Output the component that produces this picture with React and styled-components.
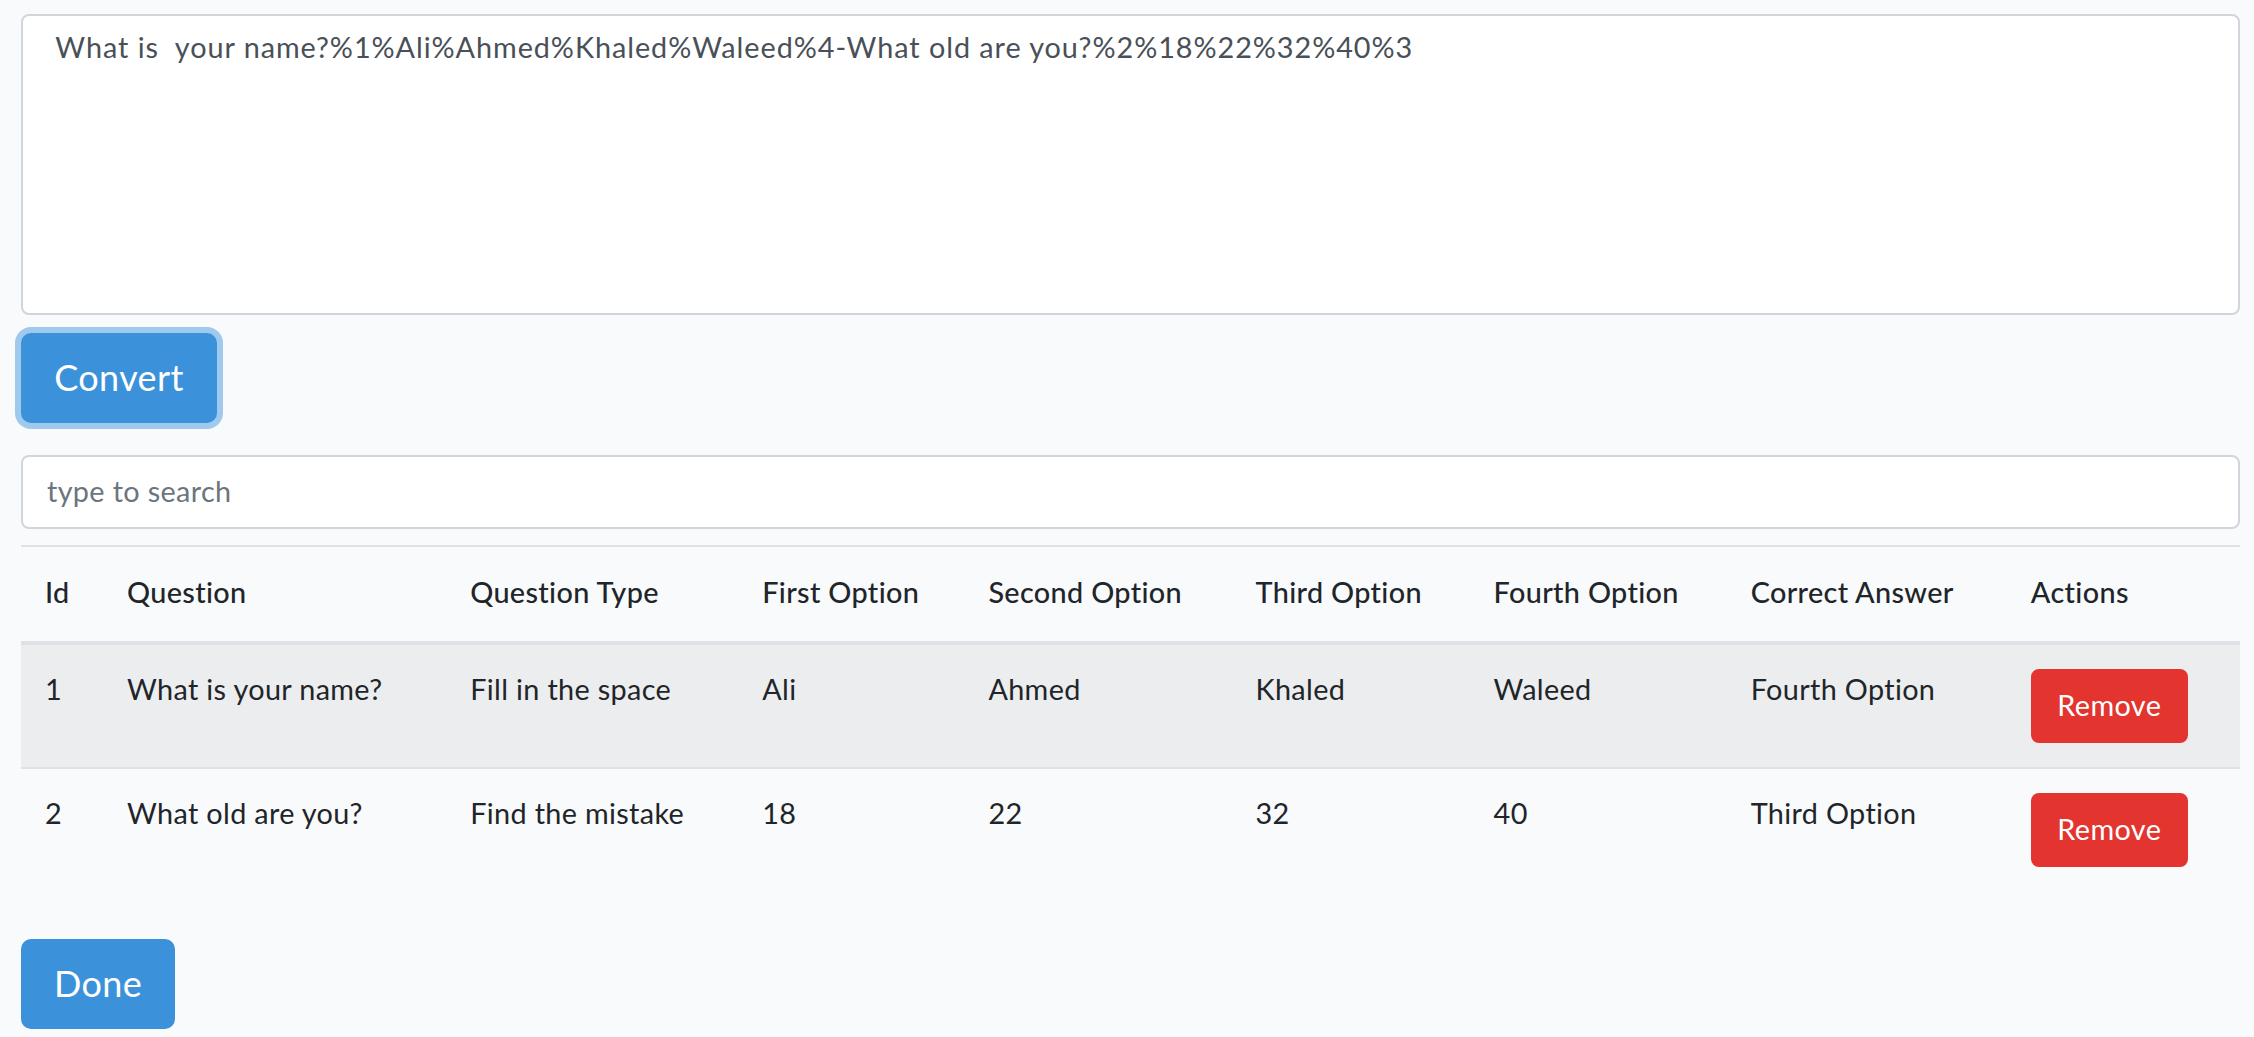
import React, { useState } from 'react';
import styled, { createGlobalStyle } from 'styled-components';

const GlobalStyle = createGlobalStyle`
  html, body {
    margin: 0;
    padding: 0;
    background: #f8fafc;
  }
  body {
    font-family: Lato, "Open Sans", sans-serif;
    font-size: 28.8px;
    line-height: 1.6;
    color: #212529;
  }
  * { box-sizing: border-box; }
`;

const Page = styled.div`
  padding: 14px 14px 8px 21px;
  display: flex;
  flex-direction: column;
  align-items: flex-start;
`;

const SourceArea = styled.textarea`
  display: block;
  width: 100%;
  height: 301px;
  padding: 8px 24px;
  font-family: inherit;
  font-size: 28.8px;
  line-height: 1.6;
  letter-spacing: 0.95px;
  color: #495057;
  background: #fff;
  border: 2px solid #d2d5dc;
  border-radius: 8px;
  resize: none;
  outline: none;
`;

const Button = styled.button`
  display: inline-block;
  font-family: inherit;
  font-size: ${p => (p.$large ? '36px' : '28.8px')};
  line-height: ${p => (p.$large ? '54px' : '46px')};
  letter-spacing: 0.4px;
  color: #fff;
  background: ${p => (p.$danger ? '#e3342f' : '#3c92da')};
  border: 2px solid ${p => (p.$danger ? '#e3342f' : '#3c92da')};
  border-radius: ${p => (p.$large ? '10px' : '8px')};
  padding: ${p => (p.$large ? '15px 0 17px' : '11px 0 13px')};
  width: ${p => p.$width}px;
  text-align: center;
  cursor: pointer;
  box-shadow: ${p => (p.$focused ? '0 0 0 6px rgba(52, 144, 220, 0.45)' : 'none')};
`;

const ConvertRow = styled.div`
  margin-top: 18px;
  line-height: 0;
`;

const SearchInput = styled.input`
  display: block;
  width: 100%;
  height: 74px;
  margin-top: 32px;
  padding: 0 24px 2px;
  font-family: inherit;
  font-size: 28.8px;
  letter-spacing: 0.35px;
  color: #495057;
  background: #fff;
  border: 2px solid #d2d5dc;
  border-radius: 8px;
  outline: none;
  &::placeholder { color: #6c757d; }
`;

const Table = styled.table`
  width: 100%;
  margin-top: 16px;
  margin-bottom: 48px;
  border-collapse: collapse;
  table-layout: fixed;
  letter-spacing: 0.35px;
`;

const HeadCell = styled.th`
  text-align: left;
  font-weight: 500;
  padding: 22px 24px 26px;
  vertical-align: bottom;
  border-top: 2px solid #dee2e6;
  border-bottom: 4px solid #dee2e6;
  line-height: 46px;
`;

const Row = styled.tr`
  background: ${p => (p.$striped ? '#ecedef' : 'transparent')};
`;

const Cell = styled.td`
  padding: ${p => (p.$action ? '24px' : '21px 24px 27px')};
  vertical-align: top;
  line-height: 46px;
  border-top: ${p => (p.$first ? 'none' : '2px solid #dee2e6')};
  white-space: nowrap;
`;

const columns = [
  { label: 'Id', width: 82 },
  { label: 'Question', width: 343 },
  { label: 'Question Type', width: 292 },
  { label: 'First Option', width: 226 },
  { label: 'Second Option', width: 267 },
  { label: 'Third Option', width: 238 },
  { label: 'Fourth Option', width: 257 },
  { label: 'Correct Answer', width: 280 },
  { label: 'Actions', width: 233 },
];

const initialRows = [
  { id: 1, question: 'What is your name?', type: 'Fill in the space', options: ['Ali', 'Ahmed', 'Khaled', 'Waleed'], correct: 'Fourth Option' },
  { id: 2, question: 'What old are you?', type: 'Find the mistake', options: ['18', '22', '32', '40'], correct: 'Third Option' },
];

export default function App() {
  const [source, setSource] = useState(' What is  your name?%1%Ali%Ahmed%Khaled%Waleed%4-What old are you?%2%18%22%32%40%3');
  const [rows, setRows] = useState(initialRows);
  const [search, setSearch] = useState('');

  const visible = rows.filter(r => r.question.toLowerCase().includes(search.toLowerCase()));

  return (
    <>
      <GlobalStyle />
      <Page>
        <SourceArea value={source} onChange={e => setSource(e.target.value)} />
        <ConvertRow>
          <Button $large $focused $width={196}>Convert</Button>
        </ConvertRow>
        <SearchInput placeholder="type to search" value={search} onChange={e => setSearch(e.target.value)} />
        <Table>
          <colgroup>
            {columns.map(c => <col key={c.label} style={{ width: c.width }} />)}
          </colgroup>
          <thead>
            <tr>
              {columns.map(c => <HeadCell key={c.label}>{c.label}</HeadCell>)}
            </tr>
          </thead>
          <tbody>
            {visible.map((r, i) => (
              <Row key={r.id} $striped={i % 2 === 0}>
                <Cell $first={i === 0}>{r.id}</Cell>
                <Cell $first={i === 0}>{r.question}</Cell>
                <Cell $first={i === 0}>{r.type}</Cell>
                {r.options.map(o => <Cell key={o} $first={i === 0}>{o}</Cell>)}
                <Cell $first={i === 0}>{r.correct}</Cell>
                <Cell $first={i === 0} $action>
                  <Button $danger $width={157} onClick={() => setRows(rows.filter(x => x.id !== r.id))}>Remove</Button>
                </Cell>
              </Row>
            ))}
          </tbody>
        </Table>
        <Button $large $width={154}>Done</Button>
      </Page>
    </>
  );
}
